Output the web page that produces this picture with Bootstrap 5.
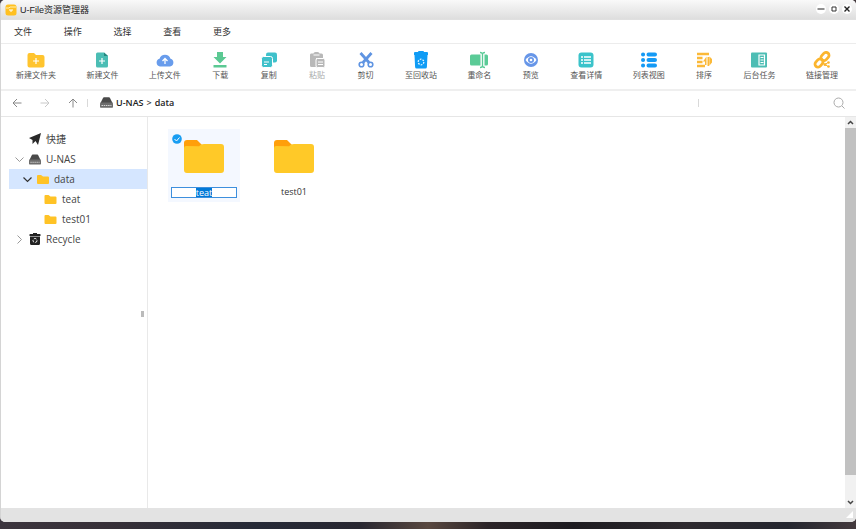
<!DOCTYPE html>
<html lang="zh-CN">
<head>
<meta charset="utf-8">
<meta name="viewport" content="width=device-width, initial-scale=1">
<title>U-File资源管理器</title>
<link href="https://cdn.jsdelivr.net/npm/bootstrap@5.3.0/dist/css/bootstrap.min.css" rel="stylesheet">
<style>
body{font-family:"Open Sans","Noto Sans CJK SC",sans-serif;font-size:10px;line-height:16px;color:#333;padding-bottom:7px;background:linear-gradient(90deg,#3c353e 0%,#373038 12%,#262a37 30%,#282731 42%,#594840 50%,#2b2428 57%,#1d1b20 67%,#2e2a2f 80%,#24262f 92%,#443a3e 100%)}
button{background:none;border:0;padding:0;color:inherit}
svg{display:block;flex:none}
.window{border-left:1px solid #d4d4d4;border-radius:5px;background:#fff;overflow:hidden}
.titlebar{height:20px;padding:0 4px;background:linear-gradient(#f9f9f9,#dedede);font-family:"Liberation Sans","Noto Sans CJK SC",sans-serif;border-bottom:1px solid #e0e0e0}
.titlebar h1{font-size:9px;line-height:16px;color:#222;margin-left:3px}
.win-btns{gap:3px;padding-bottom:2px}
.win-btn{width:10px;height:10px;border-radius:50%;background:#fff}
.menus{height:24px;padding:0 13px;border-bottom:1px solid #ececec;font-size:9px}
.menu-set{width:217px}
.tools{height:47px;padding:7px 18px 0 15px;border-bottom:2px solid #efefef;font-size:8px;line-height:12px}
.tools button{color:#555;white-space:nowrap}
.tools button svg{margin:0 auto;width:18px;height:18px}
.tools button:disabled{color:#aaa}
.address{height:26px;padding:0 11px 2px 10px;border-bottom:1px solid #e6e6e6}
.arrows{gap:16px}
.divider{width:1px;height:8px;background:#d9d9d9}
.crumbs{font-size:9px;font-weight:600;gap:3px}
.crumbs a{color:#222;text-decoration:none}
.search{border:0;outline:0;width:130px;height:14px;font-size:9px}
.tree{width:147px;border-right:1px solid #e9e9e9;padding:12px 0 0 8px;flex:none}
.tree-row{height:20px;width:100%;gap:5px;padding-left:6px;text-align:left;color:#444}
.tree-row.level-1{padding-left:14px}
.tree-row.level-2{padding-left:35px}
.tree-row.chosen{background:#d5e6ff}
.tree-row .caret{width:9px;height:9px}
.grip{width:3px;height:6px;background:#bbb;margin:62px 3px 0 auto}
.files{padding:12px 20px;gap:18px}
.tile{width:72px;height:73px;padding:10px 3px 0;font-size:9px;line-height:12px}
.tile.chosen{background:#f4f8ff}
.tile .folder{margin:0 auto;width:40px;height:38px}
.tick{position:absolute;left:4px;top:5px}
.rename{width:100%;height:11px;margin-top:10px;border:1px solid #3d8fdd;font-size:9px;line-height:9px;padding:0;text-align:center;border-radius:0;color:#333;background:#fff}
.rename:focus,.rename:focus-visible{outline:none;border-color:#3d8fdd}
.rename::selection{background:#0078d7;color:#fff}
.tile-name{margin-top:9px}
.scroller{width:11px;background:#f1f1f1;flex:none}
.scroller button{height:11px;width:11px}
.thumb{height:94%;background:#c1c1c1}
.status{height:14px;background:#e3e3e3;padding:3px 3px 0}
</style>
<script src="https://cdn.jsdelivr.net/npm/bootstrap@5.3.0/dist/js/bootstrap.bundle.min.js"></script>
</head>
<body class="vh-100 overflow-hidden">
<svg class="d-none" aria-hidden="true">
 <symbol id="folder" viewBox="0 0 40 38"><path fill="#ff9f0a" d="M0 12V4q0-3 3-3h10l5 5v6z"/><path fill="#ffc928" d="M0 9q0-2 2-2l13 .2Q17 5 20 5h17q3 0 3 3v23q0 3-3 3H3q-3 0-3-3z"/></symbol>
 <symbol id="small-folder" viewBox="0 0 12 11"><path fill="#ffc326" d="M0 2q0-1 1-1h3l2 1.500h5q1 0 1 1V9q0 1-1 1H1q-1 0-1-1z"/></symbol>
 <symbol id="drive" viewBox="0 0 13 11"><path fill="#4a4a4a" d="M3 1q.3-.8 1-.8h5q.7 0 1 .8L12.500 6H.5z"/><path fill="#6c6c6c" d="M0 6.500q0-1 1-1h11q1 0 1 1V10q0 .8-.8.800H.8Q0 10.800 0 10z"/><path stroke="#d5d5d5" stroke-width="1" stroke-dasharray="1.500 .7" d="M1.500 8.500h10"/></symbol>
</svg>
<div class="window h-100 d-flex flex-column">
 <header class="titlebar d-flex align-items-center">
  <svg width="12" height="12" viewBox="0 0 12 12"><rect x=".5" y=".5" width="11" height="11" rx="2.500" fill="#ffc021"/><path d="M1 4h3l1-1h6" stroke="#fff0b0" fill="none"/><path d="M4 6h4M6 6v2" stroke="#fff"/></svg>
  <h1 class="mb-0 fw-normal flex-grow-1">U-File资源管理器</h1>
  <div class="win-btns d-flex">
   <button class="win-btn" aria-label="最小化"><svg width="10" height="10"><path d="M1.500 5h7" stroke="#222" stroke-width="1.200"/></svg></button>
   <button class="win-btn" aria-label="最大化"><svg width="10" height="10"><path d="M3 3h4v4H3z" fill="none" stroke="#333"/></svg></button>
   <button class="win-btn" aria-label="关闭"><svg width="10" height="10"><path d="M2.500 2.500l5 5m0-5l-5 5" stroke="#222" stroke-width="1.400"/></svg></button>
  </div>
 </header>
 <nav class="menus d-flex align-items-center" aria-label="菜单">
  <div class="menu-set d-flex justify-content-between"><button>文件</button><button>操作</button><button>选择</button><button>查看</button><button>更多</button></div>
 </nav>
 <div class="tools d-flex justify-content-between align-items-start" role="toolbar">
  <button><svg viewBox="0 0 18 18"><path fill="#ffc42e" d="M.5 4q0-2 2-2h4.500l2 2h6.500q2 0 2 2v8.500q0 2-2 2h-13q-2 0-2-2z"/><path d="M9 7v6M6 10h6" stroke="#fff" stroke-width="1.200"/></svg>新建文件夹</button>
  <button><svg viewBox="0 0 18 18"><path fill="#4bbdb4" d="M3 3q0-1.500 1.500-1.500H11L15 5v10q0 1.500-1.500 1.500h-9Q3 16.500 3 15z"/><path fill="#27877f" d="M11 1.500L15 5h-4z"/><path d="M9 7v6M6 10h6" stroke="#fff" stroke-width="1.200"/></svg>新建文件</button>
  <button><svg viewBox="0 0 18 18"><path fill="#689cec" d="M4 15.500a4 4 0 0 1-.5-7.800 5.800 5.800 0 0 1 11 0 4 4 0 0 1-.5 7.800z"/><path d="M9 13V8M6.500 10L9 7.500l2.500 2.500" stroke="#fff" stroke-width="1.300" fill="none"/></svg>上传文件</button>
  <button><svg viewBox="0 0 18 18"><path fill="#5bc993" d="M6 1h6v5h3.500L9 12.500 2.500 6H6zM2.500 14h13v2.500h-13z"/></svg>下载</button>
  <button><svg viewBox="0 0 18 18"><rect x="6" y="1.500" width="11" height="10" rx="2" fill="#3fc1cb"/><rect x="1.500" y="5.500" width="11" height="11" rx="2" fill="#3fc1cb" stroke="#fff"/><path d="M4 11h5M4 13.500h3" stroke="#fff"/></svg>复制</button>
  <button disabled><svg viewBox="0 0 18 18"><path fill="#b8b8b8" d="M3 2.500h2.500q0-1.500 2-1.500h2q2 0 2 1.500h2q1.500 0 1.500 1.500v3H8v9H3.500Q2 16 2 14.500V4q0-1.500 1-1.500z"/><path d="M5.500 4h6" stroke="#fff"/><rect x="8" y="7.500" width="9" height="9" rx="1.500" fill="#b8b8b8" stroke="#fff"/><path d="M10 11h5M10 13.500h5" stroke="#fff"/></svg>粘贴</button>
  <button><svg viewBox="0 0 18 18"><path d="M3.500 2l8.500 9.500M14.500 2L6 11.500" stroke="#5f94e2" stroke-width="2.800"/><circle cx="4.500" cy="13.500" r="2.300" fill="#fff" stroke="#5f94e2" stroke-width="1.600"/><circle cx="13.500" cy="13.500" r="2.300" fill="#fff" stroke="#5f94e2" stroke-width="1.600"/></svg>剪切</button>
  <button><svg viewBox="0 0 18 18"><path fill="#109cf5" d="M6 1q0-1 1-1h4q1 0 1 1h3q1 0 1 1v2h-.500l-.600 12q-.1 1.500-1.500 1.500H4.600q-1.400 0-1.500-1.500L2.500 4H2V2q0-1 1-1z"/><circle cx="9" cy="11" r="2.800" fill="none" stroke="#e6f6ff" stroke-width="1.300" stroke-dasharray="1.700 1.200"/></svg>至回收站</button>
  <button><svg viewBox="0 0 18 18"><path fill="#5bcb97" d="M1.500 3.500h9v11h-9Q0 14.500 0 13V5q0-1.500 1.500-1.500zM14.500 3.500h2Q18 3.500 18 5v8q0 1.500-1.500 1.500h-2z"/><path d="M10 1.500q2.500 0 2.500 2v11q0 2-2.500 2M15 1.500q-2.500 0-2.500 2v11q0 2 2.500 2" fill="none" stroke="#5bcb97" stroke-width="1.300"/></svg>重命名</button>
  <button><svg viewBox="0 0 18 18"><circle cx="9" cy="9" r="7" fill="#6796e8"/><path fill="#fff" d="M3.500 9Q9 1.500 14.500 9 9 16.500 3.500 9z"/><circle cx="9" cy="9" r="3" fill="#6796e8"/><circle cx="9" cy="9" r="1.300" fill="#fff"/></svg>预览</button>
  <button><svg viewBox="0 0 18 18"><rect x="1.500" y="1.500" width="15" height="15" rx="3" fill="#3bc3ca"/><path d="M4 6h2m1 0h7M4 9h2m1 0h7M4 12h2m1 0h7" stroke="#fff" stroke-width="1.700"/></svg>查看详情</button>
  <button><svg viewBox="0 0 18 18"><path d="M3 3.500h.1M8.500 3.500h6.500M3 9h.1M8.500 9h6.500M3 14.500h.1M8.500 14.500h6.500" stroke="#159af5" stroke-width="4" stroke-linecap="round"/></svg>列表视图</button>
  <button><svg viewBox="0 0 18 18"><path d="M2 3h12M2 7h5.500M2 11h5.500M2 15h8" stroke="#fbb938" stroke-width="2.400"/><path fill="#fbb938" d="M8 10.500l3.500-5V14H10v-3.500zM12.500 6h1.700v9h-1.700zM14.500 5.500L17 8v3.500l-2.500 3z"/></svg>排序</button>
  <button><svg viewBox="0 0 18 18"><rect x="1" y="1.500" width="16" height="15" rx="1" fill="#4dbdb4"/><path fill="none" stroke="#fff" stroke-width="1.200" d="M9 4h5.500v10H9z"/><path d="M10.500 6.500h3M10.500 9h3M10.500 11.500h3" stroke="#fff"/></svg>后台任务</button>
  <button><svg viewBox="0 0 18 18"><g fill="none" stroke="#fbb52e" stroke-width="2.800"><rect x="7.500" y="2.500" width="9" height="6" rx="3" transform="rotate(-48 12 5.500)"/><rect x="1.500" y="9" width="9" height="6" rx="3" transform="rotate(-48 6 12)"/></g><path d="M12 13.500l3-2M12 13.500l3 2" stroke="#fbb52e"/><circle cx="12" cy="13.500" r="1.500" fill="#fbb52e"/><circle cx="15.500" cy="11.500" r="1.300" fill="#fbb52e"/><circle cx="15.500" cy="15.500" r="1.300" fill="#fbb52e"/></svg>链接管理</button>
 </div>
 <div class="address d-flex align-items-center">
  <div class="arrows d-flex align-items-center">
   <button aria-label="后退"><svg width="12" height="12"><path d="M10.500 6H2m4-4L2 6l4 4" fill="none" stroke="#888"/></svg></button>
   <button aria-label="前进"><svg width="12" height="12"><path d="M1.500 6H10M6 2l4 4-4 4" fill="none" stroke="#c8c8c8"/></svg></button>
   <button aria-label="向上"><svg width="12" height="12"><path d="M6 10.500V2M2 6l4-4 4 4" fill="none" stroke="#888"/></svg></button>
  </div>
  <span class="divider ms-2"></span>
  <nav class="crumbs d-flex align-items-center flex-grow-1 ps-2" aria-label="路径"><svg class="ms-1" width="13" height="11"><use href="#drive"/></svg><a href="#">U-NAS</a><span>&gt;</span><a href="#">data</a></nav>
  <span class="divider me-1"></span>
  <input class="search" type="text" aria-label="搜索">
  <button aria-label="搜索"><svg width="12" height="12"><circle cx="5.500" cy="5.500" r="4.500" fill="none" stroke="#aaa"/><path d="M9 9l2.500 2.500" stroke="#aaa"/></svg></button>
 </div>
 <main class="d-flex flex-grow-1 overflow-hidden">
  <aside class="tree">
   <button class="tree-row d-flex align-items-center"><span class="caret"></span><svg width="12" height="12"><path fill="#292929" d="M0 5L12 0 9 12 6.500 8l-3 3V7z"/></svg>快捷</button>
   <button class="tree-row d-flex align-items-center"><svg class="caret" viewBox="0 0 9 9"><path d="M.5 2.500l4 4 4-4" fill="none" stroke="#999"/></svg><svg width="12" height="11"><use href="#drive"/></svg>U-NAS</button>
   <button class="tree-row level-1 chosen d-flex align-items-center"><svg class="caret" viewBox="0 0 9 9"><path d="M.5 2.500l4 4 4-4" fill="none" stroke="#333" stroke-width="1.200"/></svg><svg width="12" height="11"><use href="#small-folder"/></svg>data</button>
   <button class="tree-row level-2 d-flex align-items-center"><svg width="13" height="11"><use href="#small-folder"/></svg>teat</button>
   <button class="tree-row level-2 d-flex align-items-center"><svg width="13" height="11"><use href="#small-folder"/></svg>test01</button>
   <button class="tree-row d-flex align-items-center"><svg class="caret" viewBox="0 0 9 9"><path d="M2.500 .5l4 4-4 4" fill="none" stroke="#999"/></svg><svg width="12" height="12"><path fill="#222" d="M4 0h4v1h3q.5 0 .5.500V3H.5V1.500Q.5 1 1 1h3zM1 3.500h10V10.500q0 1.500-1.500 1.500h-7Q1 12 1 10.500z"/><circle cx="6" cy="7.500" r="2" fill="none" stroke="#fff" stroke-dasharray="2.500 1.200"/></svg>Recycle</button>
   <div class="grip"></div>
  </aside>
  <section class="files d-flex flex-wrap align-content-start flex-grow-1">
   <div class="tile chosen position-relative">
    <svg class="tick" width="10" height="10"><circle cx="5" cy="5" r="4.800" fill="#189df2"/><path d="M2.500 5l2 2 3-3.500" fill="none" stroke="#fff"/></svg>
    <svg class="folder"><use href="#folder"/></svg>
    <input class="rename d-block" type="text" value="teat" aria-label="文件夹名称" autofocus>
   </div>
   <div class="tile text-center"><svg class="folder"><use href="#folder"/></svg><div class="tile-name">test01</div></div>
  </section>
  <div class="scroller d-flex flex-column">
   <button aria-label="向上滚动"><svg width="11" height="11"><path d="M3 7l2.500-2.500L8 7" fill="none" stroke="#444" stroke-width="1.500"/></svg></button>
   <div class="flex-grow-1"><div class="thumb"></div></div>
   <button aria-label="向下滚动"><svg width="11" height="11"><path d="M3 4l2.500 2.500L8 4" fill="none" stroke="#444" stroke-width="1.500"/></svg></button>
  </div>
 </main>
 <footer class="status d-flex justify-content-end"><svg width="7" height="7"><path d="M7 0v7H0z" fill="#fff"/></svg></footer>
</div>
<script>
const nameBox = document.querySelector('.rename');
nameBox.focus();
nameBox.select();
</script>
</body>
</html>
